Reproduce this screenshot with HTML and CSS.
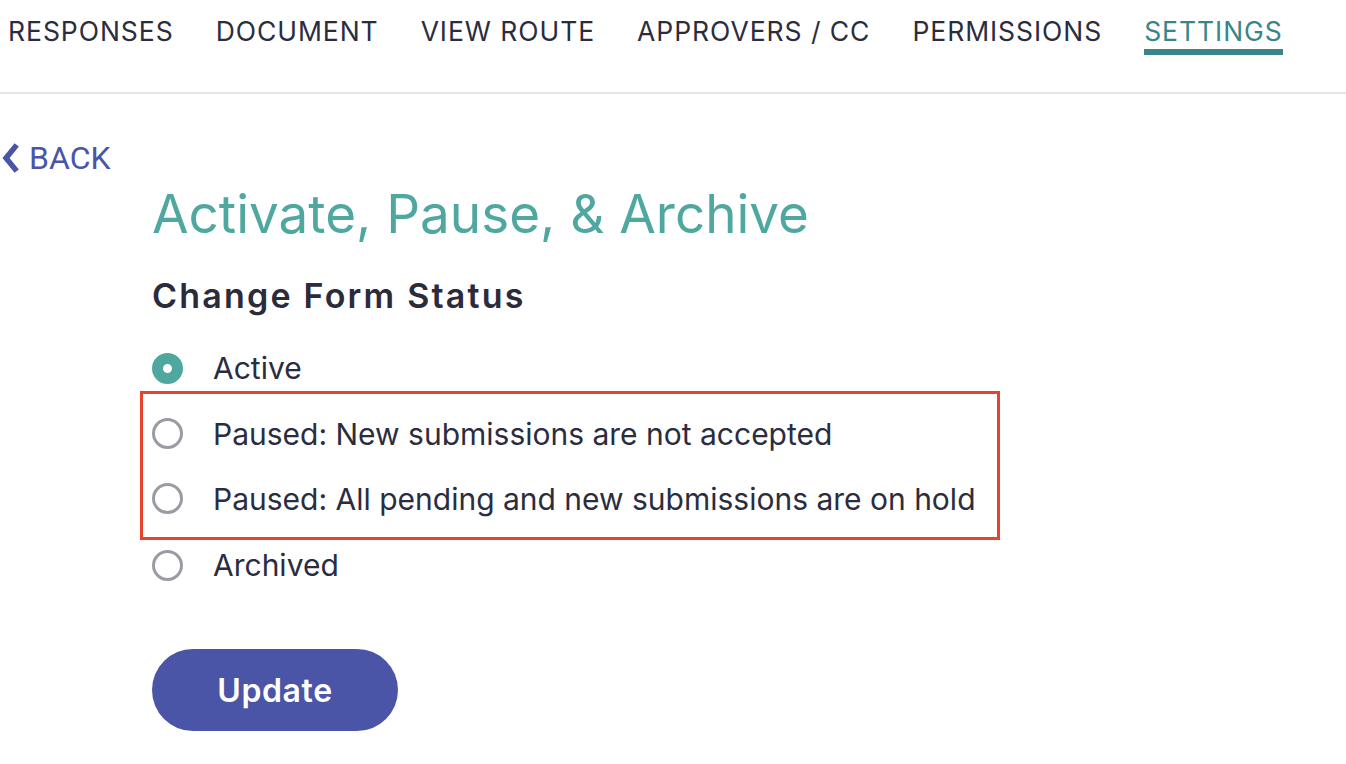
FILE: index.html
```html
<!DOCTYPE html>
<html>
<head>
<meta charset="utf-8">
<link rel="stylesheet" href="styles.css">
</head>
<body>
<nav class="tabs">
  <a class="tab">RESPONSES</a>
  <a class="tab">DOCUMENT</a>
  <a class="tab">VIEW ROUTE</a>
  <a class="tab">APPROVERS / CC</a>
  <a class="tab">PERMISSIONS</a>
  <a class="tab active">SETTINGS</a>
</nav>
<div class="page">
  <a class="back"><svg class="chev" viewBox="0 0 18 30" width="18" height="30"><path d="M14 4 L5 15 L14 26" fill="none" stroke="currentColor" stroke-width="5.5" stroke-linecap="square" stroke-linejoin="miter"/></svg>BACK</a>
  <main class="content">
    <h1 class="title">Activate, Pause, &amp; Archive</h1>
    <h2 class="subtitle">Change Form Status</h2>
    <div class="options">
      <label class="option"><span class="radio checked"></span>Active</label>
      <div class="highlight">
        <label class="option"><span class="radio"></span>Paused: New submissions are not accepted</label>
        <label class="option"><span class="radio"></span>Paused: All pending and new submissions are on hold</label>
      </div>
      <label class="option"><span class="radio"></span>Archived</label>
    </div>
    <button class="update">Update</button>
  </main>
</div>
</body>
</html>
```

FILE: styles.css
```css
html, body { margin: 0; padding: 0; background: #fff; }
body { font-family: Inter, "Noto Sans", sans-serif; color: #2b2b3b; }

.tabs {
  display: flex;
  gap: 42px;
  padding: 14px 0 0 8px;
  height: 78px;
  border-bottom: 2px solid #e6e6e6;
}
.tab {
  font-family: Inter, sans-serif;
  font-size: 26.5px;
  letter-spacing: 0.95px;
  color: #2b2d3e;
  height: 35px;
  line-height: 35px;
}
.tab.active {
  color: #3a8589;
  border-bottom: 6px solid #3a8589;
}

.page { position: relative; }
.back {
  position: absolute;
  left: 1px;
  top: 45px;
  display: flex;
  align-items: center;
  gap: 10px;
  font-family: Roboto, sans-serif;
  font-size: 32px;
  color: #4a55a8;
}
.chev { display: block; }

.content {
  padding: 88px 0 0 152px;
}
.title {
  margin: 0;
  font-family: Inter, sans-serif;
  font-weight: 400;
  font-size: 53px;
  letter-spacing: 0;
  line-height: 64px;
  color: #4fa89f;
}
.subtitle {
  margin: 30px 0 0;
  font-family: Inter, sans-serif;
  font-weight: 600;
  font-size: 34px;
  letter-spacing: 2.2px;
  line-height: 40px;
  color: #2b2b3b;
}
.options {
  margin-top: 19px;
  display: flex;
  flex-direction: column;
  width: 848px;
}
.option {
  display: flex;
  align-items: center;
  height: 66px;
  font-size: 30px;
  color: #2b2d3e;
}
.highlight {
  border: 3px solid #e8432d;
  padding: 7px 0 6px 9px;
  margin: -10px 0 -8px -12px;
}
.highlight .option { height: 65px; }
.radio {
  width: 25px;
  height: 25px;
  border: 3px solid #9b9ba3;
  border-radius: 50%;
  margin-right: 30px;
  flex: none;
}
.radio.checked {
  border: 11px solid #4fa89f;
  width: 9px;
  height: 9px;
  background: #fff;
}
.update {
  display: block;
  margin-top: 51px;
  width: 246px;
  height: 82px;
  border: none;
  border-radius: 41px;
  background: #4a55a8;
  color: #fff;
  font-family: Inter, sans-serif;
  font-weight: 600;
  font-size: 32px;
  letter-spacing: 0.6px;
}
```
